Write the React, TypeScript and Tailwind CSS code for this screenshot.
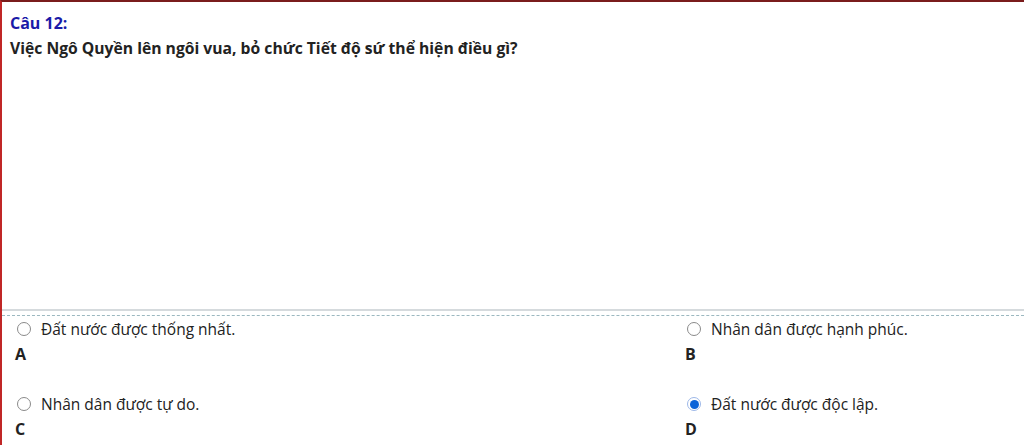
import React from "react";

function Radio({ checked }: { checked?: boolean }) {
  return checked ? (
    <span className="inline-flex h-[14px] w-[14px] items-center justify-center rounded-full border border-[#9db8e8] bg-white">
      <span className="h-[9px] w-[9px] rounded-full bg-[#0b63d8]" />
    </span>
  ) : (
    <span className="inline-block h-[14px] w-[14px] rounded-full border border-[#8a8a8a] bg-white" />
  );
}

export default function App() {
  const options = [
    { text: "Đất nước được thống nhất.", label: "A" },
    { text: "Nhân dân được hạnh phúc.", label: "B" },
    { text: "Nhân dân được tự do.", label: "C" },
    { text: "Đất nước được độc lập.", label: "D", checked: true },
  ];

  return (
    <div
      className="h-[445px] w-[1024px] overflow-hidden border-t-2 border-l-2 border-t-[#7a1c1c] border-l-[#c02626] bg-white text-[#222]"
      style={{ fontFamily: '"Open Sans", "Noto Sans", sans-serif' }}
    >
      <div className="h-[307px] px-2 pt-[11px]">
        <div className="text-[16px] font-bold leading-[20px] text-[#1a1aa8]">Câu 12:</div>
        <div className="mt-[5px] text-[15.7px] font-bold leading-[20px] text-[#222]">
          Việc Ngô Quyền lên ngôi vua, bỏ chức Tiết độ sứ thể hiện điều gì?
        </div>
      </div>
      <div className="h-[2px] bg-[#d5dadd]" />
      <div className="mt-[4px] border-t border-dashed border-[#9bb8c0]" />
      <div className="grid grid-cols-[670px_1fr] gap-y-[29px] pl-[13px] pt-[2px]">
        {options.map((o) => (
          <div key={o.label}>
            <div className="flex items-center gap-[10px] pl-[2px] text-[15.5px] leading-[22px]">
              <Radio checked={o.checked} />
              <span>{o.text}</span>
            </div>
            <div className="mt-[4px] text-[16px] font-bold leading-[20px] text-[#222]">{o.label}</div>
          </div>
        ))}
      </div>
    </div>
  );
}
